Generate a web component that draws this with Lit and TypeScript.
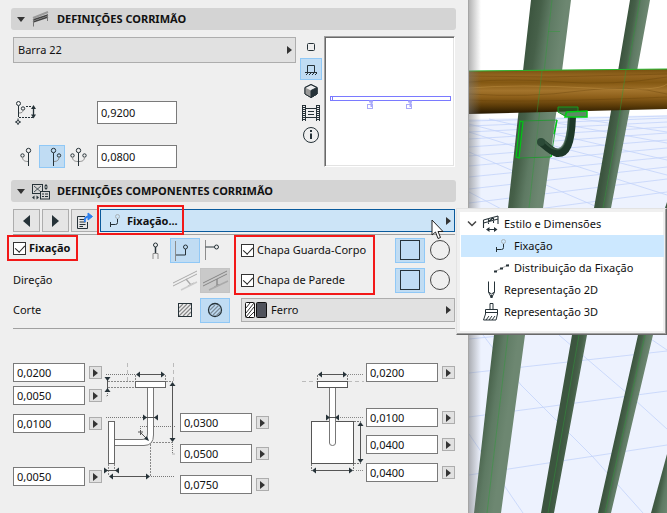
import { LitElement, html, css, svg, nothing } from "lit";
import { customElement, property, state } from "lit/decorators.js";

const INK = "#263238";
const GREY = "#8c8c8c";

const arrowRight = html`<svg class="tri" width="5" height="8" viewBox="0 0 5 8" aria-hidden="true"><path d="M0 0L5 4L0 8Z" fill="#333" /></svg>`;

const icon = (w: number, h: number, body: unknown) =>
  html`<svg width=${w} height=${h} viewBox="0 0 ${w} ${h}" fill="none" stroke=${INK} aria-hidden="true">${body}</svg>`;

const icons = {
  rail: icon(17, 16, svg`<path d="M1 7L16 1" stroke="#999" stroke-width="2"/><path d="M1 9L16 4M1 11L16 6" stroke="#444" stroke-width="1.4"/><path d="M1.5 8V15.500M15.500 3V10" stroke="#777"/>`),
  components: icon(18, 17, svg`<rect x=".5" y="1.500" width="10" height="9"/><path d="M2 3L9 9M9 3L2 9" stroke-width=".8"/><path d="M14 1L16 3.500H12ZM14 7L16 4.500H12Z" fill=${INK} stroke="none"/><path d="M0 14.500L2.500 12.500V16.500ZM7 14.500L4.500 12.500V16.500Z" fill=${INK} stroke="none"/><rect x="8.500" y="8.500" width="9" height="7.500" fill="#d4d4d4"/><path d="M10 11H12M10 13.500H12M13 11H16M13 13.500H16"/>`),
  height: icon(22, 25, svg`<circle cx="3.500" cy="3.500" r="2"/><path d="M3.500 6V17"/><circle cx="8" cy="8.500" r="1.700"/><path d="M4 13C7 13 8 12 8 10" stroke=${GREY}/><path d="M11 6.500H16M4 17.500H18" stroke-dasharray="2 1"/><path d="M18.500 7V16" stroke-width="1.300"/><path d="M18.500 5L21 9H16ZM18.500 18.500L21 14.500H16Z" fill=${INK} stroke="none"/><circle cx="3" cy="22" r="1.500"/><path d="M3 18.500V20M3 24V25.500M0 22H1.500M4.500 22H6"/>`),
  sideLeft: icon(20, 20, svg`<circle cx="12.500" cy="3.500" r="2.200"/><path d="M12.500 6V19"/><circle cx="6.500" cy="8.500" r="1.700"/><path d="M6.500 10C6.500 13 8 14.500 12 14.500" stroke=${GREY}/>`),
  sideRight: icon(20, 20, svg`<circle cx="11.500" cy="3.500" r="2.200"/><path d="M11.500 6V19"/><circle cx="17" cy="8.500" r="1.700"/><path d="M17 10C17 13 15.500 14.500 12 14.500" stroke=${GREY}/>`),
  sideBoth: icon(20, 20, svg`<circle cx="10.500" cy="3.500" r="2.200"/><path d="M10.500 6V19"/><circle cx="4.500" cy="8.500" r="1.700"/><circle cx="16.500" cy="8.500" r="1.700"/><path d="M4.500 10C4.500 13 6 14.500 10 14.500M16.500 10C16.500 13 15 14.500 11 14.500" stroke=${GREY}/>`),
  plan: icon(16, 16, svg`<rect x="4.500" y="4.500" width="7" height="7" rx="1"/>`),
  elevation: icon(16, 16, svg`<path d="M4.500 11V4.500H11.500V11"/><path d="M2 11.500H14"/><path d="M3 14L5 12M6 14L8 12M9 14L11 12M12 14L14 12"/>`),
  cube: icon(16, 16, svg`<path d="M8 1.500L14 4.500V11L8 14.500L2 11V4.500Z" fill="#eee"/><path d="M2 4.500L8 7.500V14.500L2 11Z" fill="#999" stroke="none"/><path d="M14 4.500L8 7.500V14.500L14 11Z" fill=${INK}/><path d="M8 1.500L14 4.500V11L8 14.500L2 11V4.500Z"/>`),
  film: icon(18, 16, svg`<path d="M2 0V16M16 0V16" stroke-width="3" stroke-dasharray="1 1"/><path d="M.5 0V16M3.500 0V16M14.500 0V16M17.500 0V16M4 3.500H14M4 12.500H14"/><path d="M6 6.500H12M6 9.500H12"/>`),
  info: icon(18, 18, svg`<circle cx="9" cy="9" r="7.500"/><path d="M9 7.500V13" stroke-width="2"/><path d="M9 4V6" stroke-width="2"/>`),
  transfer: icon(18, 18, svg`<path d="M9 4.500H1.500V16.500H11.500V10"/><path d="M3.500 7.500H8M3.500 10H9.500M3.500 12.500H9.500M3.500 14.500H7"/><path d="M9 10C8 6 10 4.500 13 4.500" stroke="#2f80ed" stroke-width="2"/><path d="M12 1L16.500 4.500L12 8Z" fill="#2f80ed" stroke="#2f80ed"/>`),
  hook: icon(16, 16, svg`<circle cx="9.500" cy="3.500" r="2" stroke="#a9b2b8"/><path d="M9.500 6V9.500Q9.500 11.500 7.500 11.500H2"/><path d="M2.500 9V14"/>`),
  fixPost: icon(20, 20, svg`<circle cx="10.500" cy="5" r="2"/><path d="M10.500 7V14" stroke-width="1.500"/><path d="M8 19V13.500H13V19" stroke=${GREY}/>`),
  fixElbow: icon(28, 24, svg`<path d="M4.500 2V22" stroke=${GREY}/><circle cx="14.500" cy="8" r="2"/><path d="M14.500 10V16H5"/>`),
  fixStraight: icon(20, 22, svg`<path d="M.5 1V21" stroke=${GREY}/><circle cx="11.500" cy="8" r="2"/><path d="M.5 8H9.500"/>`),
  dirSlant: icon(26, 22, svg`<g stroke="#aaa"><path d="M1 14L25 2M1 17L25 5"/><path d="M14 10L19 16M16 17L22 14" stroke-width="1.300"/><path d="M9 21L25 13" stroke="#ccc" stroke-width="1.500"/></g>`),
  dirVertical: icon(28, 22, svg`<g stroke="#858585"><path d="M2 14L26 2M2 17L26 5"/><path d="M16 10V17M13.500 18L18.500 15.500" stroke-width="1.300"/><path d="M8 21L27 12" stroke="#aaa" stroke-width="1.500"/></g>`),
  cutSquare: icon(16, 16, svg`<path d="M2 6L6 2M2 10L10 2M2 14L14 2M6 14L14 6M10 14L14 10" stroke="#888" stroke-width="1.200"/><rect x="1.500" y="1.500" width="13" height="13"/>`),
  cutCircle: icon(16, 16, svg`<circle cx="8" cy="8" r="6.500" stroke-width="1.300"/><path d="M3 8L8 3M3 12L12 3M6 13L13 6M9 14L14 9" stroke="#7d8c98" stroke-width="1.200"/>`),
  square: icon(22, 22, svg`<rect x="1.500" y="1.500" width="19" height="19"/>`),
  circle: icon(22, 22, svg`<circle cx="11" cy="11" r="9.500" stroke="#444"/>`),
  style: icon(18, 18, svg`<path d="M1.500 5L16 1M1.500 8L16 4M1.500 5V13M6.500 4V9M11.500 3V8M16 1V9M6 7L11 3" stroke-width="1.100"/><path d="M6 14.500H13"/><path d="M4 14.500L7.500 12V17ZM15.500 14.500L12 12V17Z" fill=${INK} stroke="none"/>`),
  spread: icon(16, 12, svg`<path d="M1 9.500L15 2.500" stroke="#aaa"/><path d="M0 9.500H3M6 6.500H9M12 3.500H15" stroke-width="2"/>`),
  pen: icon(18, 20, svg`<path d="M6.500 1.500V12L9.500 18L12.500 12V1.500M6.500 12L9.500 14L12.500 12"/><path d="M9.500 15V18" stroke-width="2"/>`),
  brush: icon(18, 20, svg`<path d="M8 7V1.500H11V7M3.500 12V7.500H15.500V12M3.500 10.500H15.500M3.500 12L1.500 18H14L15.500 12"/><path d="M4 18L7 14M7 18L10 14M10 18L13 14"/>`),
};

const head = (x: number, y: number, dir: "l" | "r" | "u" | "d") => {
  const d = { l: "M0 0L4 -3V3Z", r: "M0 0L-4 -3V3Z", u: "M0 0L-3 4H3Z", d: "M0 0L-3 -4H3Z" }[dir];
  return svg`<path transform="translate(${x} ${y})" d=${d} fill=${INK} stroke="none"/>`;
};

@customElement("number-field")
class NumberField extends LitElement {
  @property() value = "";
  @property() label = "";
  @property({ type: Boolean }) large = false;
  static styles = css`
    :host { display: flex; align-items: center; gap: 4px; }
    input { box-sizing: border-box; width: 72px; height: 19px; margin: 0; padding: 0 3px; border: 1px solid #7a7a7a; border-radius: 0; background: #fff; color: #111; font: 11px "Noto Sans", "Open Sans", sans-serif; }
    .large { width: 80px; height: 23px; }
    button { box-sizing: border-box; display: grid; place-items: center; width: 13px; height: 13px; padding: 0; border: 1px solid #adadad; background: #e1e1e1; }
  `;
  render() {
    return html`<input class=${this.large ? "large" : "small"} .value=${this.value} aria-label=${this.label} />
      ${this.large ? nothing : html`<button aria-label="Opções: ${this.label}">${arrowRight}</button>`}`;
  }
}

@customElement("model-view")
class ModelView extends LitElement {
  static styles = css`
    :host { display: block; position: relative; overflow: hidden; background: #fff; }
    svg { position: absolute; inset: 0; width: 100%; height: 100%; }
  `;
  private steel(id: string, x1: number, y1: number, x2: number, y2: number) {
    return svg`<linearGradient id=${id} gradientUnits="userSpaceOnUse" x1=${x1} y1=${y1} x2=${x2} y2=${y2}><stop offset="0" stop-color="#3c553f"/><stop offset=".3" stop-color="#466049"/><stop offset=".6" stop-color="#5e7a63"/><stop offset="1" stop-color="#6d8771"/></linearGradient>`;
  }
  render() {
    return html`<svg viewBox="0 0 198 513" preserveAspectRatio="xMinYMin slice" role="img" aria-label="Vista 3D do corrimão">
      <defs>
        ${this.steel("post1", 62, 0, 97, 5)}${this.steel("post2", 161, 0, 180, 3)}${this.steel("post3", 169, 335, 183, 338)}${this.steel("post4", 182, 513, 197, 516)}
        <linearGradient id="wood" x1="0" y1="0" x2="0" y2="1"><stop offset="0" stop-color="#76500f"/><stop offset=".15" stop-color="#946520"/><stop offset=".3" stop-color="#845812"/><stop offset=".48" stop-color="#a3742c"/><stop offset=".64" stop-color="#8b5d18"/><stop offset=".82" stop-color="#5b3b08"/><stop offset="1" stop-color="#241700"/></linearGradient>
        <linearGradient id="edge" x1="0" x2="1"><stop offset="0" stop-color="#777" stop-opacity=".55"/><stop offset="1" stop-color="#777" stop-opacity="0"/></linearGradient>
      </defs>
      <path d="M0 119L198 115V513H0Z" fill="#edf2fe"/>
      <g stroke="#c3d3fa" fill="none" stroke-width=".8">
        <path d="M0 121L198 116M0 126L198 118M0 132L198 122M0 139L198 127M0 147L198 133M0 156L198 140M0 166L198 148M0 177L198 157M0 189L198 167M0 203L198 179M0 218L198 192M0 339L30 336M0 373L198 351M0 417L198 391M0 475L198 445"/>
        <path d="M20 119L198 160M60 118L198 143M0 132L198 195M0 152L140 212M0 192L38 212M100 117L198 132M0 124L198 175"/>
        <path d="M14 335L52 385L124 457L174 513M90 335L166 400L198 429M176 335L198 350M0 434L54 513"/>
      </g>
      <path d="M62 0H102L93 71L74 208L56 335L32 513H5L25 335L39 208L54 71Z" fill="url(#post1)"/>
      <path d="M161 0H181L168 71L142 208L118 335L85 513H72L103 335L125 208L149 71Z" fill="url(#post2)"/>
      <path d="M198 202V270L184 335L142 513H129L169 335L196 208Z" fill="url(#post3)"/>
      <path d="M198 454V513H182Z" fill="url(#post4)"/>
      <path d="M83 0L60 208L39 335L18 513M171 0L134 208L110 335L79 513M176 335L136 513M79 31.500H91" stroke="#2f9b39" stroke-opacity=".6" fill="none" stroke-width=".8"/>
      <path d="M0 71L198 69V109L0 114Z" fill="url(#wood)"/>
      <path d="M0 82Q40 78 92 82T198 77M0 94Q60 98 110 91T198 94M0 100Q60 103 198 97M0 76L80 77L198 74" stroke="#5e3b05" stroke-opacity=".4" fill="none" stroke-width=".8"/>
      <path d="M0 88Q50 84 120 88T198 84" stroke="#c29245" stroke-opacity=".45" fill="none"/>
      <path d="M0 71L198 69" stroke="#26b52c"/>
      <path d="M73 71L68 113M157 70L151 111" stroke="#2f9b39" stroke-opacity=".6" stroke-width=".8"/>
      <path d="M53 121L88 120L82 157L49 158Z" fill="#5e7a63" fill-opacity=".4" stroke="#1a9b2b" stroke-width=".8"/>
      <path d="M50 158L47 157L51 121L54 122Z" fill="#2f6a3a" stroke="#00c814" stroke-width="1.200"/>
      <path d="M88 120L85 134M82 157L83 151" stroke="#00c814" stroke-width="1.300"/>
      <path d="M72 142C79 148 83 152 88 153C97 154 102 145 103 117" stroke="#1d3828" stroke-width="8" fill="none"/>
      <path d="M75 141C82 148 85 150 90 149C96 147 99 136 100 117" stroke="#3e5f49" stroke-opacity=".7" stroke-width="2" fill="none"/>
      <circle cx="72" cy="142" r="4" fill="#2b4a37"/>
      <path d="M89 107H109V112H97L96 116L89 112Z" fill="#255c2c" fill-opacity=".7" stroke="#169c20"/>
      <path d="M98 112L118 111V117H96Z" fill="#5d8a66" stroke="#00d014" stroke-width="1.500"/>
      <rect width="12" height="513" fill="url(#edge)"/>
    </svg>`;
  }
}

@customElement("app-root")
class AppRoot extends LitElement {
  @state() private open = true;

  static styles = css`
    :host { display: flex; position: relative; min-height: 100vh; overflow: hidden; background: #efefef; color: #111; font: 11px/16px "Noto Sans", "Open Sans", sans-serif; }
    * { box-sizing: border-box; }
    svg { display: block; flex: none; }
    button, select { font: inherit; color: inherit; margin: 0; border-radius: 0; }
    .panel { flex: 1 1 469px; min-width: 0; padding: 8px 13px 0 13px; border-right: 1px solid #a5a5a5; }
    model-view { flex: 1 1 198px; }
    h2 { display: flex; align-items: center; height: 22px; margin: 0 -1px 0 -2px; padding-left: 6px; border-radius: 3px; background: #d4d4d4; font-size: 11px; font-weight: 700; }
    h2 svg { margin-right: 7px; }
    h2 .glyph { width: 25px; }

    .combo { position: relative; display: block; min-width: 0; }
    .combo select, .combo .popup { display: flex; align-items: center; width: 100%; height: 26px; padding: 0 4px; appearance: none; border: 1px solid #adadad; background: #e1e1e1; text-align: left; }
    .combo .tri { position: absolute; right: 4px; top: 50%; margin-top: -4px; pointer-events: none; }
    .combo .popup { height: 23px; gap: 3px; padding-left: 7px; border-color: #0a5a9c; background: #cce4f7; font-weight: 700; }
    .combo select.material { height: 24px; padding-left: 29px; }
    .swatches { position: absolute; left: 4px; top: 4px; pointer-events: none; }

    .definition { display: grid; grid-template-columns: minmax(0, 1fr) 22px 133px; margin: 6px 0 12px; }
    .settings { padding: 1px 4px 0 0; }
    .line { display: grid; grid-template-columns: 84px 1fr; align-items: center; height: 23px; }
    .settings .combo { margin-bottom: 37px; }
    .line + .line { margin-top: 22px; }
    .line .height { padding-left: 2px; }
    .trio { display: flex; }
    .tool { display: grid; place-items: center; width: 26px; height: 23px; padding: 0; border: 1px solid transparent; background: none; }
    .tool.on { border-color: #90c8f6; background: #c0dcf3; }
    .views .tool { width: 22px; height: 22px; }
    .preview { margin-left: 2px; width: 131px; height: 131px; border: 1px solid; border-color: #a0a0a0 #fff #fff #a0a0a0; background: #fff; box-shadow: inset 1px 1px #696969, inset -1px -1px #e3e3e3; }

    .toolbar { display: grid; grid-template-columns: 27px 27px 27px minmax(0, 1fr); gap: 2px; padding: 7px 0 2px; border-bottom: 1px solid #a0a0a0; }
    .step { display: grid; place-items: center; height: 23px; padding: 0; border: 1px solid #adadad; background: #e5e5e5; }
    .mark { position: absolute; border: 2px solid #f21818; pointer-events: none; }
    .mark.menu { left: -3px; top: -4px; bottom: -3px; width: 87px; }
    .mark.title { left: -6px; top: 0; width: 71px; height: 26px; }
    .mark.plates { left: -7px; top: 0; width: 141px; height: 60px; }

    .options { display: grid; grid-template-columns: 217px minmax(0, 1fr); column-gap: 11px; padding-bottom: 3px; border-bottom: 1px solid #a0a0a0; }
    .side { position: relative; }
    .row { display: flex; align-items: center; justify-content: space-between; height: 30px; }
    .row .tool { width: 30px; height: 25px; }
    .row .tool.off { border-color: #c4c4c4; background: #c9c9c9; }
    .check { display: flex; align-items: center; gap: 3px; }
    .check.strong { font-weight: 700; padding-bottom: 4px; }
    .check input { position: relative; appearance: none; width: 13px; height: 13px; margin: 0; border: 1px solid #333; background: #fff; }
    .check input:checked::after { content: ""; position: absolute; left: 3px; top: 0; width: 5px; height: 8px; border: solid #222; border-width: 0 1px 1px 0; transform: rotate(42deg); }
    .side .combo { margin-top: 3px; }

    .dims { display: flex; align-items: flex-start; padding: 31px 0 16px; }
    .fields { display: flex; flex-direction: column; padding-top: 3px; }
    .fields.mid { padding-top: 53px; }
    .push { margin-left: auto; }
    .g4 { margin-top: 4px; } .g8 { margin-top: 8px; } .g9 { margin-top: 9px; } .g12 { margin-top: 12px; }
    .g26 { margin-top: 26px; } .g34 { margin-top: 34px; }

    .tree { position: absolute; z-index: 2; right: 0; top: 208px; width: 211px; height: 127px; margin: 0; padding: 4px 2px 0 4px; list-style: none; border: 1px solid; border-color: #e3e3e3 #696969 #696969 #e3e3e3; background: linear-gradient(#fff, #fff) 3px 3px / 203px 119px no-repeat #f0f0f0; box-shadow: inset -1px -1px #a0a0a0; }
    .tree button { display: flex; align-items: center; gap: 4px; width: 100%; height: 22px; padding: 0 0 0 21px; border: 0; background: none; }
    .tree .root { padding-left: 6px; }
    .tree .fold { margin-right: 1px; }
    .tree .sub { padding-left: 33px; }
    .tree .here { background: #cce8ff; }
    .cursor { position: absolute; z-index: 3; right: 10px; top: 10px; pointer-events: none; }
  `;

  private fold = html`<svg width="8" height="5" viewBox="0 0 8 5" aria-hidden="true"><path d="M0 0H8L4 5Z" fill="#333"/></svg>`;

  private tool(name: string, glyph: unknown, mode = "") {
    return html`<button class="tool ${mode}" aria-label=${name} aria-pressed=${mode ? "true" : "false"}>${glyph}</button>`;
  }

  private elbow() {
    return html`<svg width="78" height="130" viewBox="0 0 78 130" fill="none" aria-hidden="true">
      <g stroke="#bbb" stroke-dasharray="4 3"><path d="M25.500 3V22M71.500 3V22"/></g>
      <g stroke="#777" stroke-dasharray="1 1"><path d="M4 14.500H33M4 57.500H42M38 66.500H73M70.500 82V94H73M38.500 66V72M49 116.500H73M5.500 31V36H4"/></g>
      <g stroke="#888" stroke-dasharray="2 1"><path d="M6 21.500H33M6 27.500H33M33.500 15V21M63.500 15V21M64 21.500H71M39 82.500H71M48.500 72V116M6.500 104V116M12.500 104V110"/></g>
      <path d="M45.500 27V74Q45.500 79.500 40 79.500H12V85.500H42Q51.500 85.500 51.500 75V27Z" fill="#fff" stroke="#777"/>
      <g fill="#fff" stroke="#666"><rect x="33.500" y="21.500" width="30" height="6"/><rect x="6.500" y="61.500" width="6" height="42"/></g>
      <g stroke="#555"><path d="M35 14.500H62M70.500 24V79M9 116.500H46M44 57.500H53M38 72L45 79M36 72H41M38.500 70V75M5.500 20V29M5 110.500H14"/></g>
      ${head(34, 14.5, "l")}${head(63, 14.5, "r")}${head(70.5, 22, "u")}${head(70.5, 82, "d")}
      ${head(45, 57.5, "r")}${head(52, 57.5, "l")}${head(7, 116.5, "l")}${head(48, 116.5, "r")}
      ${head(6, 110.5, "r")}${head(13, 110.5, "l")}${head(5.5, 21, "d")}${head(5.5, 28, "u")}
      <path d="M47 81L42 79L45 76Z" fill=${INK}/>
    </svg>`;
  }

  private front() {
    return html`<svg width="66" height="130" viewBox="0 0 66 130" fill="none" aria-hidden="true">
      <path d="M2 21.500H17M48 21.500H64" stroke="#bbb" stroke-dasharray="4 3"/>
      <g stroke="#888" stroke-dasharray="1 1"><path d="M48 14.500H64M40 57.500H64M56 110.500H64"/></g>
      <g stroke="#777" stroke-dasharray="2 1"><path d="M17.500 15V21M47.500 15V21M54 61.500H61M54 103.500H61M11.500 104V111M53.500 104V111"/></g>
      <g fill="#fff" stroke="#777"><rect x="11.500" y="61.500" width="42" height="42" stroke="#555"/><path d="M29.500 27V83Q29.500 85.500 32.500 85.500T35.500 83V27Z"/><rect x="17.500" y="21.500" width="30" height="6" stroke="#555"/></g>
      <g stroke="#555"><path d="M19 14.500H46M60.500 64V101M14 110.500H51M28 57.500H37"/></g>
      ${head(18, 14.5, "l")}${head(47, 14.5, "r")}${head(60.5, 62, "u")}${head(60.5, 103, "d")}
      ${head(12, 110.5, "l")}${head(53, 110.5, "r")}${head(30, 57.5, "r")}${head(35, 57.5, "l")}
    </svg>`;
  }

  private field(value: string, label: string, gap = "") {
    return html`<number-field class=${gap} .value=${value} .label=${label}></number-field>`;
  }

  render() {
    return html`
      <main class="panel">
        <h2><span>${this.fold}</span><span class="glyph">${icons.rail}</span>DEFINIÇÕES CORRIMÃO</h2>
        <section class="definition">
          <div class="settings">
            <div class="combo"><select aria-label="Perfil do corrimão"><option>Barra 22</option></select>${arrowRight}</div>
            <div class="line"><span class="height">${icons.height}</span><number-field large value="0,9200" label="Altura"></number-field></div>
            <div class="line"><div class="trio">${this.tool("Lado esquerdo", icons.sideLeft)}${this.tool("Lado direito", icons.sideRight, "on")}${this.tool("Ambos os lados", icons.sideBoth)}</div><number-field large value="0,0800" label="Afastamento"></number-field></div>
          </div>
          <div class="views">${this.tool("Planta", icons.plan)}${this.tool("Alçado", icons.elevation, "on")}${this.tool("3D", icons.cube)}${this.tool("Imagem", icons.film)}${this.tool("Informação", icons.info)}</div>
          <div class="preview"><svg width="129" height="129" viewBox="0 0 129 129" fill="none" aria-hidden="true"><rect x="5.500" y="59.500" width="120" height="4" stroke="#7a7aff"/><path d="M7.500 60V63" stroke="#7a7aff"/><g stroke="#aaaafa"><path d="M44 64.500H48M46.500 64V70M83 64.500H87M85.500 64V70" stroke-width="2"/><rect x="42.500" y="67.500" width="5" height="4"/><rect x="81.500" y="67.500" width="5" height="4"/></g></svg></div>
        </section>

        <h2><span>${this.fold}</span><span class="glyph">${icons.components}</span>DEFINIÇÕES COMPONENTES CORRIMÃO</h2>
        <div class="toolbar">
          <button class="step" aria-label="Anterior"><svg width="7" height="12" viewBox="0 0 7 12"><path d="M7 0V12L0 6Z" fill=${INK}/></svg></button>
          <button class="step" aria-label="Seguinte"><svg width="7" height="12" viewBox="0 0 7 12"><path d="M0 0V12L7 6Z" fill=${INK}/></svg></button>
          <button class="step" aria-label="Transferir definições">${icons.transfer}</button>
          <div class="combo">
            <button class="popup" aria-haspopup="menu" aria-expanded=${this.open} @click=${() => (this.open = !this.open)}>${icons.hook}Fixação...</button>${arrowRight}
            <span class="mark menu"></span>
            <svg class="cursor" width="14" height="21" viewBox="0 0 14 21" aria-hidden="true"><path d="M1 1V16L4.500 13L7 19.500L9.500 18.500L7 12.500H12Z" fill="#fff" stroke="#222"/></svg>
          </div>
        </div>
        <section class="options">
          <div class="side">
            <div class="row"><label class="check strong"><input type="checkbox" checked />Fixação</label><div class="trio">${this.tool("Fixação ao poste", icons.fixPost)}${this.tool("Fixação em cotovelo", icons.fixElbow, "on")}${this.tool("Fixação reta", icons.fixStraight)}</div></div>
            <div class="row"><span>Direção</span><div class="trio">${this.tool("Perpendicular", icons.dirSlant)}${this.tool("Vertical", icons.dirVertical, "off")}</div></div>
            <div class="row"><span>Corte</span><div class="trio">${this.tool("Quadrado", icons.cutSquare)}${this.tool("Circular", icons.cutCircle, "on")}</div></div>
            <span class="mark title"></span>
          </div>
          <div class="side">
            <div class="row"><label class="check"><input type="checkbox" checked />Chapa Guarda-Corpo</label><div class="trio">${this.tool("Chapa quadrada", icons.square, "on")}${this.tool("Chapa circular", icons.circle)}</div></div>
            <div class="row"><label class="check"><input type="checkbox" checked />Chapa de Parede</label><div class="trio">${this.tool("Chapa quadrada", icons.square, "on")}${this.tool("Chapa circular", icons.circle)}</div></div>
            <div class="combo"><select class="material" aria-label="Material"><option>Ferro</option></select>
              <svg class="swatches" width="22" height="16" viewBox="0 0 22 16" aria-hidden="true"><rect x=".5" y=".5" width="9" height="15" rx="1" fill="#fff" stroke="#111"/><path d="M1 6L5 1M1 11L9 1M1 15L9 5M4 15L9 10" stroke="#333"/><rect x="11.500" y=".5" width="10" height="15" rx="1" fill="#50535c" stroke="#111"/></svg>${arrowRight}</div>
            <span class="mark plates"></span>
          </div>
        </section>
        <section class="dims">
          <div class="fields">${this.field("0,0200", "Largura da chapa")}${this.field("0,0050", "Espessura da chapa", "g4")}${this.field("0,0100", "Diâmetro", "g9")}${this.field("0,0050", "Espessura na parede", "g34")}</div>
          ${this.elbow()}
          <div class="fields mid">${this.field("0,0300", "Raio")}${this.field("0,0500", "Altura da fixação", "g12")}${this.field("0,0750", "Distância à parede", "g12")}</div>
          <div class="push">${this.front()}</div>
          <div class="fields">${this.field("0,0200", "Comprimento da chapa")}${this.field("0,0100", "Diâmetro da barra", "g26")}${this.field("0,0400", "Altura na parede", "g8")}${this.field("0,0400", "Largura na parede", "g9")}</div>
        </section>
      </main>
      <model-view></model-view>
      ${this.open ? html`<ul class="tree">
        <li><button class="root"><svg class="fold" width="10" height="8" viewBox="0 0 10 8" fill="none"><path d="M1 1.500L5 5.500L9 1.500" stroke="#444" stroke-width="1.500"/></svg>${icons.style}Estilo e Dimensões</button></li>
        <li><button class="sub here">${icons.hook}Fixação</button></li>
        <li><button class="sub">${icons.spread}Distribuição da Fixação</button></li>
        <li><button>${icons.pen}Representação 2D</button></li>
        <li><button>${icons.brush}Representação 3D</button></li>
      </ul>` : nothing}
    `;
  }
}
